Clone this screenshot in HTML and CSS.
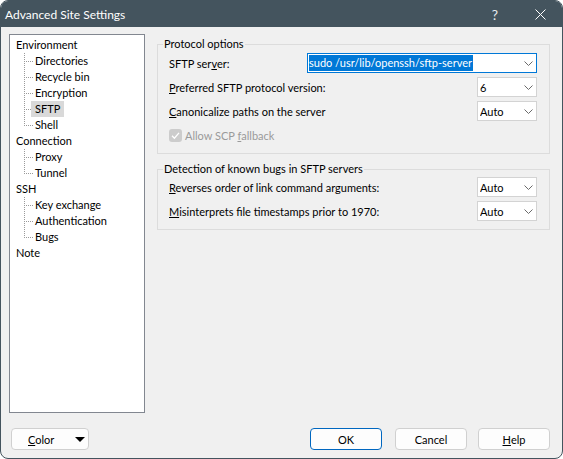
FILE: index.html
```html
<!DOCTYPE html>
<html>
<head>
<meta charset="utf-8">
<link rel="stylesheet" href="styles.css">
</head>
<body>
<div class="window">
  <div class="titlebar">
    <span class="title">Advanced Site Settings</span>
    <span class="tb-btn tb-help">?</span>
    <span class="tb-btn tb-close"><svg width="11" height="11" viewBox="0 0 11 11"><path d="M0.5 0.5 L10.5 10.5 M10.5 0.5 L0.5 10.5" stroke="#ffffff" stroke-width="1" fill="none"/></svg></span>
  </div>
  <div class="body">
    <div class="main">
      <ul class="tree">
        <li><span class="label">Environment</span>
          <ul class="children">
            <li><span class="label">Directories</span></li>
            <li><span class="label">Recycle bin</span></li>
            <li><span class="label">Encryption</span></li>
            <li><span class="label selected">SFTP</span></li>
            <li><span class="label">Shell</span></li>
          </ul>
        </li>
        <li><span class="label">Connection</span>
          <ul class="children">
            <li><span class="label">Proxy</span></li>
            <li><span class="label">Tunnel</span></li>
          </ul>
        </li>
        <li><span class="label">SSH</span>
          <ul class="children">
            <li><span class="label">Key exchange</span></li>
            <li><span class="label">Authentication</span></li>
            <li><span class="label">Bugs</span></li>
          </ul>
        </li>
        <li><span class="label">Note</span></li>
      </ul>
      <div class="panel">
        <fieldset class="group">
          <legend>Protocol options</legend>
          <div class="row">
            <span class="row-label">SFTP ser<u>v</u>er:</span>
            <div class="combo combo-wide focused"><span class="combo-text"><span class="sel">sudo /usr/lib/openssh/sftp-server</span></span><svg class="chev" width="9" height="5" viewBox="0 0 9 5"><path d="M0.5 0.5 L4.5 4.5 L8.5 0.5" fill="none" stroke="#6a6a6a"/></svg></div>
          </div>
          <div class="row">
            <span class="row-label"><u>P</u>referred SFTP protocol version:</span>
            <div class="combo"><span class="combo-text">6</span><svg class="chev" width="9" height="5" viewBox="0 0 9 5"><path d="M0.5 0.5 L4.5 4.5 L8.5 0.5" fill="none" stroke="#6a6a6a"/></svg></div>
          </div>
          <div class="row">
            <span class="row-label"><u>C</u>anonicalize paths on the server</span>
            <div class="combo"><span class="combo-text">Auto</span><svg class="chev" width="9" height="5" viewBox="0 0 9 5"><path d="M0.5 0.5 L4.5 4.5 L8.5 0.5" fill="none" stroke="#6a6a6a"/></svg></div>
          </div>
          <div class="row check-row">
            <span class="checkbox"><svg width="13" height="13" viewBox="0 0 13 13"><path d="M3 6.8 L5.4 9.2 L10 3.8" fill="none" stroke="#ffffff" stroke-width="1.3"/></svg></span>
            <span class="check-label">Allow SCP <u>f</u>allback</span>
          </div>
        </fieldset>
        <fieldset class="group group2">
          <legend>Detection of known bugs in SFTP servers</legend>
          <div class="row">
            <span class="row-label"><u>R</u>everses order of link command arguments:</span>
            <div class="combo"><span class="combo-text">Auto</span><svg class="chev" width="9" height="5" viewBox="0 0 9 5"><path d="M0.5 0.5 L4.5 4.5 L8.5 0.5" fill="none" stroke="#6a6a6a"/></svg></div>
          </div>
          <div class="row">
            <span class="row-label"><u>M</u>isinterprets file timestamps prior to 1970:</span>
            <div class="combo"><span class="combo-text">Auto</span><svg class="chev" width="9" height="5" viewBox="0 0 9 5"><path d="M0.5 0.5 L4.5 4.5 L8.5 0.5" fill="none" stroke="#6a6a6a"/></svg></div>
          </div>
        </fieldset>
      </div>
    </div>
    <div class="buttons">
      <div class="btn btn-color"><span><u>C</u>olor</span><svg width="10" height="5" viewBox="0 0 10 5"><path d="M0 0 L10 0 L5 5 Z" fill="#000"/></svg></div>
      <div class="btn btn-ok">OK</div>
      <div class="btn btn-cancel">Cancel</div>
      <div class="btn btn-help"><u>H</u>elp</div>
    </div>
  </div>
</div>
</body>
</html>
```
FILE: styles.css
```css
html, body {
  margin: 0;
  padding: 0;
  background: #ffffff;
}

.window {
  box-sizing: border-box;
  width: 563px;
  height: 459px;
  display: flex;
  flex-direction: column;
  background: #f0f0f0;
  border: 1px solid #44545e;
  border-radius: 8px;
  overflow: hidden;
  font-family: Lato, "Liberation Sans", sans-serif;
  font-size: 11px;
  color: #000;
}

.titlebar {
  height: 26px;
  flex: none;
  display: flex;
  align-items: center;
  background: #44545e;
  color: #ffffff;
}

.title {
  flex: 1;
  padding-left: 4px;
  font-size: 12px;
}

.tb-btn {
  height: 26px;
  display: flex;
  align-items: center;
  justify-content: center;
}

.tb-help {
  width: 46px;
  font-size: 14px;
  color: #e8ecee;
}

.tb-close {
  width: 44px;
}

.body {
  flex: 1;
  display: flex;
  flex-direction: column;
  padding: 7px 12px 0 8px;
}

.main {
  display: flex;
  align-items: flex-start;
}

/* tree */
.tree {
  box-sizing: border-box;
  width: 136px;
  height: 379px;
  margin: 0;
  padding: 2px 0 0 2px;
  list-style: none;
  background: #ffffff;
  border: 1px solid #828790;
}

.tree li {
  margin: 0;
  padding: 0;
}

.label {
  display: inline-block;
  height: 16px;
  line-height: 16px;
  padding: 0 4px;
  white-space: nowrap;
}

.label.selected {
  background: #d9d9d9;
}

.children {
  list-style: none;
  margin: 0 0 0 12px;
  padding: 0;
}

.children li {
  padding-left: 7px;
  background-image:
    repeating-linear-gradient(to bottom, #9a9a9a 0 1px, transparent 1px 2px),
    repeating-linear-gradient(to right, #9a9a9a 0 1px, transparent 1px 2px);
  background-size: 1px 100%, 7px 1px;
  background-position: 0 0, 2px 8px;
  background-repeat: no-repeat;
}

.children li:last-child {
  background-size: 1px 9px, 7px 1px;
}

/* right panel */
.panel {
  width: 393px;
  margin-left: 12px;
  margin-top: 2px;
  display: flex;
  flex-direction: column;
}

.group {
  margin: 0;
  padding: 1px 12px 8px 5px;
  border: 1px solid #dcdcdc;
  min-width: 0;
}

.group legend {
  padding: 0 1px;
  line-height: 16px;
}

.group2 {
  margin-top: 7px;
  padding-top: 0;
  padding-bottom: 8px;
}

.row {
  display: flex;
  align-items: center;
  height: 20px;
  padding-left: 6px;
  margin-bottom: 4px;
}

.row:last-child {
  margin-bottom: 0;
}

.row-label {
  flex: 1;
  white-space: nowrap;
}

.combo {
  box-sizing: border-box;
  width: 60px;
  height: 20px;
  display: flex;
  align-items: center;
  background: #ffffff;
  border: 1px solid #d3d3d3;
  padding: 0 3px 0 2px;
}

.combo-wide {
  width: 230px;
  padding-left: 1px;
}

.combo.focused {
  border-color: #0078d7;
}

.combo-text {
  flex: 1;
  white-space: nowrap;
  overflow: hidden;
}

.sel {
  display: inline-block;
  background: #0078d7;
  color: #ffffff;
  line-height: 16px;
  padding-right: 1px;
}

.chev {
  flex: none;
}

.check-row {
  padding-left: 6px;
}

.checkbox {
  box-sizing: border-box;
  width: 13px;
  height: 13px;
  border-radius: 3px;
  background: #cccccc;
  display: flex;
  margin-right: 3px;
}

.check-label {
  color: #9a9a9a;
}

/* bottom buttons */
.buttons {
  display: flex;
  align-items: center;
  margin-top: 15px;
}

.btn {
  box-sizing: border-box;
  height: 22px;
  width: 72px;
  display: flex;
  align-items: center;
  justify-content: center;
  background: #fdfdfd;
  border: 1px solid #d0d0d0;
  border-radius: 4px;
}

.btn-color {
  width: 78px;
  margin-left: 2px;
  justify-content: space-between;
  padding: 0 3px 0 16px;
}

.btn-ok {
  margin-left: auto;
  border-color: #0067c0;
}

.btn-cancel {
  margin-left: 13px;
}

.btn-help {
  margin-left: 11px;
}
```
